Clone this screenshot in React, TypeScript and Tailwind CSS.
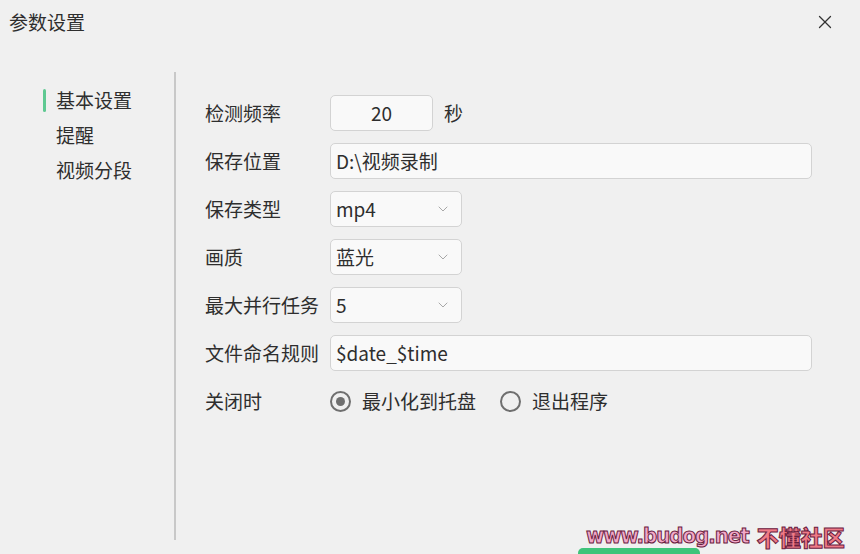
import { X, ChevronDown } from 'lucide-react';

const font = "font-['Microsoft_YaHei','Noto_Sans_CJK_SC',sans-serif]";

const Select = ({ value }: { value: string }) => (
  <div className="flex h-[36px] w-[132px] items-center justify-between rounded-[5px] border border-[#d3d3d3] bg-[#f9f9f9] pl-[5px] pr-[10px]">
    <span>{value}</span>
    <ChevronDown className="h-4 w-4 text-[#9a9a9a]" strokeWidth={1.3} />
  </div>
);

const Row = ({ label, children }: { label: string; children: React.ReactNode }) => (
  <div className="flex h-[48px] items-center">
    <div className="w-[125px] shrink-0">{label}</div>
    {children}
  </div>
);

const Radio = ({ label, checked }: { label: string; checked?: boolean }) => (
  <div className="flex items-center gap-[11px]">
    <div className="flex h-[21px] w-[21px] items-center justify-center rounded-full border-2 border-[#6f6f6f]">
      {checked && <div className="h-[9px] w-[9px] rounded-full bg-[#6f6f6f]" />}
    </div>
    <span>{label}</span>
  </div>
);

export default function App() {
  return (
    <div className={`relative h-[554px] w-[860px] overflow-hidden bg-[#f0f0f0] text-[19px] text-[#2e2e2e] ${font}`}>
      <div className="flex h-[44px] items-center justify-between pl-[9px] pr-[24px]">
        <span>参数设置</span>
        <X className="h-[22px] w-[22px] text-[#333]" strokeWidth={1.4} />
      </div>

      <div className="flex pt-[28px]">
        <div className="w-[174px] shrink-0 pl-[43px] pt-[11px]">
          <div className="flex h-[35px] items-center">
            <div className="mr-[10px] h-[23px] w-[3px] rounded-sm bg-[#5fc992]" />
            <span>基本设置</span>
          </div>
          <div className="flex h-[35px] items-center pl-[13px]">提醒</div>
          <div className="flex h-[35px] items-center pl-[13px]">视频分段</div>
        </div>

        <div className="h-[468px] w-[2px] shrink-0 bg-[#c8c8c8]" />

        <div className="flex-1 pl-[29px] pr-[48px] pt-[17px]">
          <Row label="检测频率">
            <div className="flex h-[36px] w-[103px] items-center justify-center rounded-[5px] border border-[#d3d3d3] bg-[#f9f9f9]">20</div>
            <span className="ml-[11px]">秒</span>
          </Row>
          <Row label="保存位置">
            <div className="flex h-[36px] flex-1 items-center rounded-[5px] border border-[#d3d3d3] bg-[#f9f9f9] pl-[5px]">D:\视频录制</div>
          </Row>
          <Row label="保存类型">
            <Select value="mp4" />
          </Row>
          <Row label="画质">
            <Select value="蓝光" />
          </Row>
          <Row label="最大并行任务">
            <Select value="5" />
          </Row>
          <Row label="文件命名规则">
            <div className="flex h-[36px] flex-1 items-center rounded-[5px] border border-[#d3d3d3] bg-[#f9f9f9] pl-[5px]">$date_$time</div>
          </Row>
          <Row label="关闭时">
            <div className="flex items-center gap-[24px]">
              <Radio label="最小化到托盘" checked />
              <Radio label="退出程序" />
            </div>
          </Row>
        </div>
      </div>

      <div className="absolute bottom-[-20px] left-[578px] h-[26px] w-[122px] rounded-[5px] bg-[#3fc47a]" />
      <div className="absolute bottom-[7px] left-[586px] flex items-center gap-[8px] whitespace-nowrap text-[22px] font-black leading-none [-webkit-text-stroke:1px_#6b2040]">
        <span className="tracking-[-1px] text-[#f2a8c8] [font-family:'DejaVu_Sans_Condensed','DejaVu_Sans',sans-serif]">www.budog.net</span>
        <span className="text-[#f07a86] [font-family:'Noto_Sans_CJK_SC',sans-serif]">不懂社区</span>
      </div>
    </div>
  );
}
